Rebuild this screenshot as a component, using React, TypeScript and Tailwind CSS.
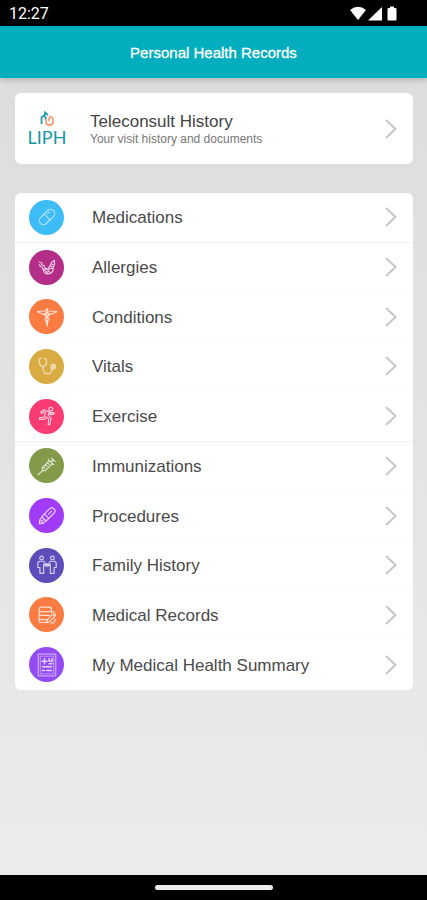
import type { ReactNode } from 'react';

interface RecordItem {
  label: string;
  color: string;
  divider: string;
  icon: ReactNode;
}

const records: RecordItem[] = [
  {
    label: 'Medications',
    color: 'bg-[#3dbcf8]',
    divider: 'border-[#f3f3f3]',
    icon: (
      <g transform="rotate(-45 12 12)" opacity=".8">
        <rect x="1" y="7" width="22" height="10" rx="5" />
        <path d="M12 7v10M15 9.800h4" />
      </g>
    ),
  },
  {
    label: 'Allergies',
    color: 'bg-[#b42d88]',
    divider: 'border-[#fcfcfc]',
    icon: (
      <>
        <path d="M2.500 6l3.500 1.200-.3 2.300 3 1 .3 2.500 2.500 1M3 9l1 2.500 2.500 1 .5 2.500 2.500 1" />
        <path d="M21 4l-3.500 2.500L16 10l-3 4M21 4v4.500l-1.500 4-.5 4.500c-1.500 2.500-4 3.500-7 3.200-2.500-.3-4-2-4-4.200" />
        <path d="M8 15.500l2.500-1.500 3 1.500 2.500-2 3 .5M10.500 17l1.500 1.800 2-1.800 1.500 1.200M17.500 8.500l2 1M16.500 11l2 1" />
      </>
    ),
  },
  {
    label: 'Conditions',
    color: 'bg-[#fa7c43]',
    divider: 'border-[#fcfcfc]',
    icon: (
      <>
        <path d="M12 4v18.500M11 6.500C8 3.500 5 5 .5 5.500 2 7 3.500 7.500 5 7.700 7 9 9 9 11 8.500M13 6.500c3-3 6-1.500 10.500-1C22 7 20.500 7.500 19 7.700 17 9 15 9 13 8.500" />
        <path d="M9.500 8c-2 3 5.500 4 5 6.500s-4 2-3.500 4 2.500 1.500 1.500 3.500M14.500 8c2 3-5.500 4-5 6.500s4 2 3.500 4" />
        <circle cx="12" cy="3" r="1.200" />
      </>
    ),
  },
  {
    label: 'Vitals',
    color: 'bg-[#d9ac43]',
    divider: 'border-[#fcfcfc]',
    icon: (
      <g opacity=".85">
        <path d="M5 2.500L2.500 4c-.3 4.500 1.200 8 4.500 9 3.500-.8 5-4.500 4.300-8.500L9 2.500" />
        <path d="M7 13c0 4.500 1.500 8.500 6 8.500s4.500-5 5.500-6" />
        <circle cx="19.500" cy="12.800" r="2.800" />
        <circle cx="19.500" cy="12.800" r="1" />
      </g>
    ),
  },
  {
    label: 'Exercise',
    color: 'bg-[#fa3c72]',
    divider: 'border-[#f3f3f3]',
    icon: (
      <>
        <circle cx="16.500" cy="3.800" r="2.300" />
        <path d="M14 7L8 4.500 4.500 7.500l1 1.500L8.500 7l2 .8L8 13.500l-5 .5v2l6.500-.3 1.700-2.700 2.800 2.500-.5 7h2l1.200-8-3.200-3.200 1-3 1.500 2 4.500-.5-.2-1.800-3 .2z" />
      </>
    ),
  },
  {
    label: 'Immunizations',
    color: 'bg-[#839b48]',
    divider: 'border-[#fcfcfc]',
    icon: (
      <>
        <path d="M1.500 22.500L6.500 17.500M6.500 17.500V14L15 5.500 18.500 9 10 17.500zM13.500 4l6.500 6.500M16.800 7.200l2.700-2.700M17.500 2.500l4 4" />
        <path d="M12.500 8l2 2M10 10.500l2 2M7.500 13l2 2" />
      </>
    ),
  },
  {
    label: 'Procedures',
    color: 'bg-[#a03cf7]',
    divider: 'border-[#f9f9f9]',
    icon: (
      <g transform="rotate(-45 12 12)">
        <path d="M7 8h14c4 0 4 7.500 0 7.500H7zM7 9H2.500L-1 12l3.500 3H7M2.500 9v6M11.500 8v7.500" />
        <path d="M15 11.700h5M4 12h1.500" />
      </g>
    ),
  },
  {
    label: 'Family History',
    color: 'bg-[#5d4cba]',
    divider: 'border-[#fcfcfc]',
    icon: (
      <>
        <circle cx="5.500" cy="3.500" r="2.200" />
        <circle cx="18.500" cy="3.500" r="2.200" />
        <path d="M3 7.500h5l3 4-1 1.500-2-2V22H3.500v-7H1V9z" />
        <path d="M21 7.500h-5l-3 4 1 1.500 2-2V22h4.500v-7H23V9z" />
        <path d="M12 10v4M10 12h4" />
      </>
    ),
  },
  {
    label: 'Medical Records',
    color: 'bg-[#fa7c43]',
    divider: 'border-[#fcfcfc]',
    icon: (
      <>
        <path d="M2.500 5.500c0-2 1-3 3-3h9c2 0 3 1 3 3s-1 2.500-3 2.500h-9c-2 0-3-.5-3-2.500zM2.500 5.500v5c0 1.500 1 2 3 2h9.500M17.500 5.500V10M2.500 10.500v5c0 1.500 1 2 3 2H12M2.500 15.500v3c0 2 1 2.500 3 2.500H13" />
        <path d="M19.500 8c1.500 1 2.500 2.500 2.500 4.500M12.500 17.500l6.500-6.500 2.500 2.500-6.500 6.500-3 .5zM16.500 21.500H20l2-4" />
      </>
    ),
  },
  {
    label: 'My Medical Health Summary',
    color: 'bg-[#944bf4]',
    divider: 'border-transparent',
    icon: (
      <>
        <path d="M1.500-1h21v26h-21z" opacity=".7" />
        <path d="M4 1.500h16v21H4z" opacity=".5" />
        <path d="M9 4.500v6M6 7.500h6M14.500 4.500v3h3.500v-3M14.500 10.500h3.500M6.500 14h11M6.500 18.500h2.500M11.500 18.500h6" strokeWidth="1.800" />
      </>
    ),
  },
];

function Chevron() {
  return (
    <svg
      viewBox="0 0 12 20"
      className="h-5 w-3 shrink-0"
      fill="none"
      stroke="#c7c7cb"
      strokeWidth="2"
      aria-hidden="true"
    >
      <path d="M1 1l9.500 9L1 19" />
    </svg>
  );
}

function StatusBar() {
  return (
    <div className="flex h-[26px] items-center justify-between bg-black pr-7 pl-[9px] text-white">
      <span className="pt-0.5 font-[Roboto,sans-serif] text-base leading-6">12:27</span>
      <svg viewBox="0 0 50 16" className="h-4 w-[50px]" fill="currentColor" aria-hidden="true">
        <path d="M1 5Q9-1.500 17 5L9 15z" />
        <path d="M33 2v13.500H19z" />
        <path d="M41 1.500h4V3h1.500q1 0 1 1v10.500q0 1-1 1h-7q-1 0-1-1V4q0-1 1-1H41z" />
      </svg>
    </div>
  );
}

function Logo() {
  return (
    <span className="flex w-[38px] flex-col items-center">
      <svg viewBox="0 0 16 16" className="h-4 w-4" fill="none" strokeWidth="1.800" aria-hidden="true">
        <path d="M2.500 13V6.500L5 4.500l1.500 1.300V9M6 4V1.500L9 4" stroke="#2a9db0" />
        <path d="M7 8v3q0 3 3.500 3t3.500-3V7.500L11.500 5.500 10 7v3" stroke="#f4a27a" />
      </svg>
      <span className="font-[Lato,sans-serif] text-lg leading-5 text-[#1596a6]">LIPH</span>
    </span>
  );
}

export default function App() {
  return (
    <div className="flex min-h-screen flex-col bg-[#e4e4e4] font-['Liberation_Sans',Arial,sans-serif]">
      <StatusBar />
      <header className="z-10 flex h-[52px] items-center justify-center bg-[#02adbe] pt-0.5 shadow-[0_2px_6px_rgba(0,0,0,0.2)]">
        <h1 className="text-[15px] leading-5 text-white [-webkit-text-stroke:0.3px_white]">
          Personal Health Records
        </h1>
      </header>

      <main className="flex-1 bg-linear-to-b from-[#dddddd] to-[#ebebeb] pt-[15px] pr-[14px] pb-6 pl-[15px]">
        <a href="#teleconsult" className="flex h-[71px] items-center rounded-md bg-white pr-4 pl-[13px]">
          <Logo />
          <span className="ml-6 flex-1">
            <span className="block text-[17px] leading-5 text-[#444444]">Teleconsult History</span>
            <span className="block text-xs leading-[14px] text-[#777777]">
              Your visit history and documents
            </span>
          </span>
          <Chevron />
        </a>

        <ul className="mt-[29px] grid min-h-[497px] auto-rows-fr rounded-md bg-white">
          {records.map((item) => (
            <li key={item.label} className={`border-b ${item.divider}`}>
              <a href="#record" className="flex h-full items-center pr-4 pl-[14px]">
                <span
                  className={`flex h-[35px] w-[35px] shrink-0 items-center justify-center rounded-full ${item.color}`}
                >
                  <svg
                    viewBox="0 0 24 24"
                    className="h-5 w-5 overflow-visible"
                    fill="none"
                    stroke="white"
                    strokeOpacity="0.75"
                    strokeWidth="1.400"
                    strokeLinejoin="round"
                    strokeLinecap="round"
                    aria-hidden="true"
                  >
                    {item.icon}
                  </svg>
                </span>
                <span className="ml-7 flex-1 pt-0.5 text-[17px] leading-6 text-[#4a4a4a]">{item.label}</span>
                <Chevron />
              </a>
            </li>
          ))}
        </ul>
      </main>

      <footer className="flex h-[25px] items-center justify-center bg-black">
        <span className="h-[5px] w-[118px] rounded-full bg-[#ececec]" />
      </footer>
    </div>
  );
}
